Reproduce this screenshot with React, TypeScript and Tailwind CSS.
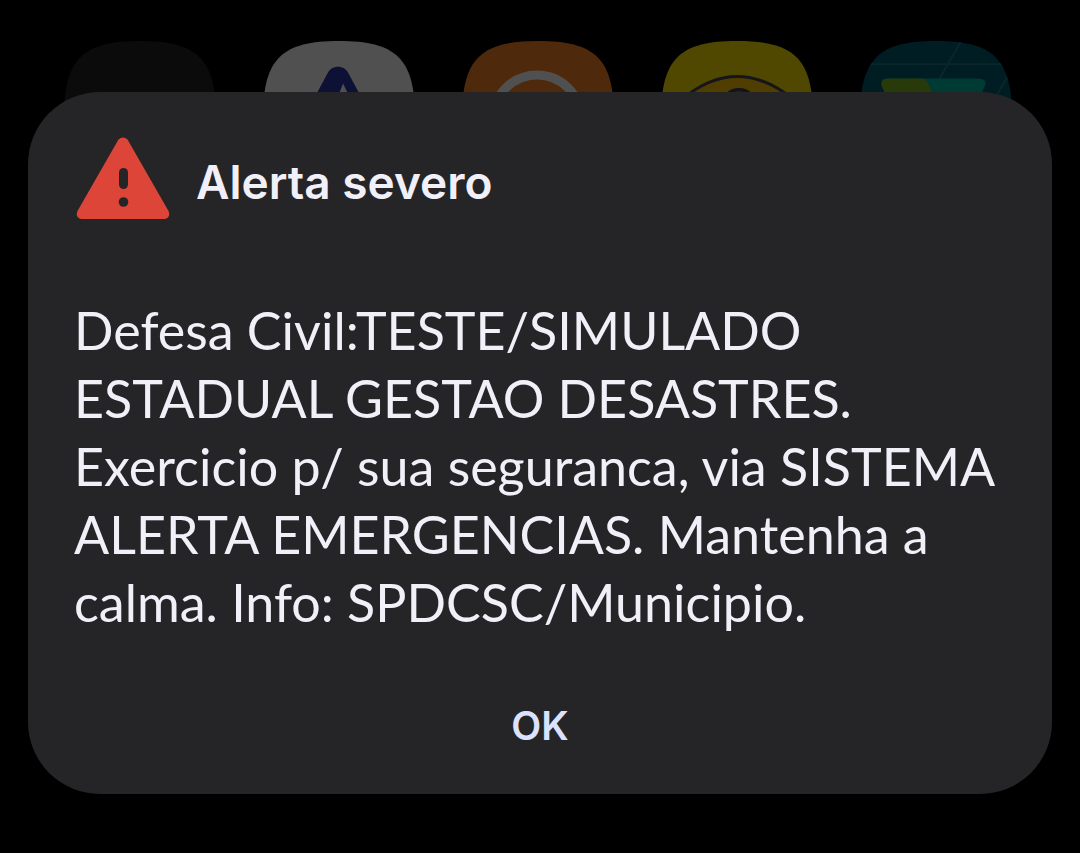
import type { ReactNode } from "react";

const SQUIRCLE =
  "M0 75C0 17 19 0 75 0S150 17 150 75S131 150 75 150S0 133 0 75Z";

function AppIcon({
  id,
  fill,
  children,
}: {
  id: string;
  fill: string;
  children?: ReactNode;
}) {
  return (
    <svg viewBox="0 0 150 150" className="size-[152px]" aria-hidden="true">
      <clipPath id={id}>
        <path d={SQUIRCLE} />
      </clipPath>
      <g clipPath={`url(#${id})`}>
        <rect width="150" height="150" fill={fill} />
        {children}
      </g>
    </svg>
  );
}

function HomeScreen() {
  return (
    <div className="absolute inset-x-0 top-0 flex justify-between pt-[41px] pr-[68px] pl-16">
      <AppIcon id="app-dark" fill="#0b0b0b" />
      <AppIcon id="app-letter" fill="#505050">
        <path
          d="M74 37 L46 89 M74 37 L102 89"
          stroke="#0d1136"
          strokeWidth="23"
          strokeLinecap="round"
          strokeLinejoin="round"
          fill="none"
        />
        <path d="M79 42L75 52H84Z" fill="#505050" />
      </AppIcon>
      <AppIcon id="app-ring" fill="#4f290b">
        <circle cx="74" cy="77" r="43.5" fill="none" stroke="#505050" strokeWidth="9" />
      </AppIcon>
      <AppIcon id="app-eye" fill="#504800">
        <path
          d="M20 58Q75 12 131 58Q75 102 20 58Z"
          fill="#503d00"
          stroke="#17151c"
          strokeWidth="3"
        />
        <circle cx="77" cy="65" r="17" fill="#25222a" stroke="#14131c" strokeWidth="3" />
      </AppIcon>
      <AppIcon id="app-map" fill="#001d23">
        <path
          d="M0 23H150M100 0L61 67M157 16L125 70"
          stroke="#0b262b"
          strokeWidth="2"
          fill="none"
        />
        <path d="M28 37H115Q127 37 123 45L103 88H44L22 46Q19 37 28 37Z" fill="#003a34" />
        <path d="M28 37H60Q65 37 67 42L91 88H44L22 46Q19 37 28 37Z" fill="#293a0a" />
      </AppIcon>
    </div>
  );
}

function WarningIcon() {
  return (
    <svg viewBox="0 0 94 82" className="h-[82px] w-[94px] shrink-0" aria-hidden="true">
      <path
        d="M42.5 2.6Q47 -1.6 51.5 2.6L92.5 74Q95 80 89 82H5Q-1 80 1.5 74Z"
        fill="#dd4538"
      />
      <rect x="43" y="31" width="9" height="21" rx="4.5" fill="#252527" />
      <circle cx="47.5" cy="65" r="4.800" fill="#252527" />
    </svg>
  );
}

export default function App() {
  return (
    <main className="relative min-h-screen bg-black px-7 pt-[92px] pb-[58px] font-['Inter','Liberation_Sans',sans-serif]">
      <HomeScreen />
      <section
        role="alertdialog"
        aria-labelledby="alert-title"
        aria-describedby="alert-message"
        className="relative flex flex-col rounded-[72px] bg-[#252527] px-[46px] pt-[45px] pb-8"
      >
        <header className="flex items-center gap-[26px] pl-[2px]">
          <WarningIcon />
          <h1 id="alert-title" className="pt-2 text-[46px] leading-[62px] font-semibold text-[#f1eff7]">
            Alerta severo
          </h1>
        </header>
        <p
          id="alert-message"
          className="mt-[77px] font-['Lato','Inter',sans-serif] text-[52px] leading-[68px] text-[#f1eff7]"
        >
          Defesa Civil:TESTE/SIMULADO ESTADUAL GESTAO DESASTRES. Exercicio p/ sua
          seguranca, via SISTEMA ALERTA EMERGENCIAS. Mantenha a calma. Info:
          SPDCSC/Municipio.
        </p>
        <button
          type="button"
          className="mt-[54px] self-center rounded-full px-12 py-2 text-[39px] leading-[56px] font-semibold text-[#dbe2ff]"
        >
          OK
        </button>
      </section>
    </main>
  );
}
